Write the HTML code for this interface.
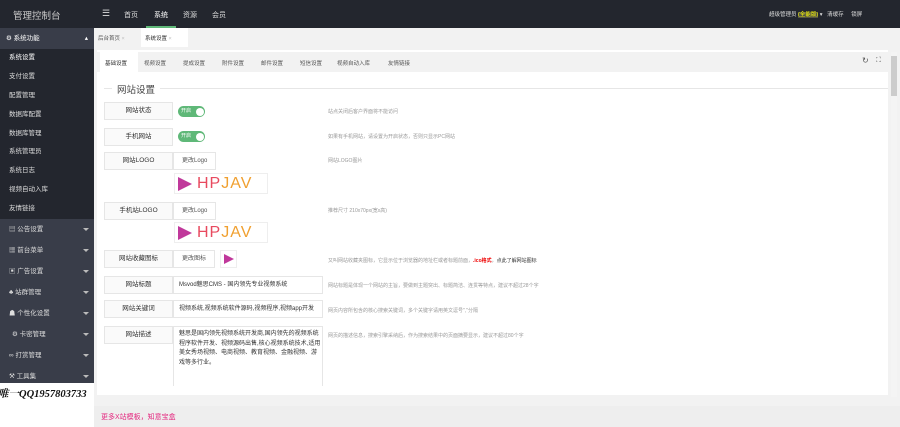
<!DOCTYPE html>
<html><head><meta charset="utf-8"><style>
*{margin:0;padding:0;box-sizing:border-box}
body{width:900px;height:427px;overflow:hidden;background:#f2f2f2;font-family:"Liberation Sans","Noto Sans CJK SC",sans-serif;font-size:7px;color:#333;position:relative}
.abs{position:absolute}
.top{left:0;top:0;width:900px;height:28px;background:#23262e;color:#ddd}
.side{left:0;top:28px;width:94px;height:355px;background:#393d49;color:#ddd}
.it{height:18.9px;line-height:18.9px;padding-left:9px;font-size:6.5px;position:relative}
.ar{height:21px;line-height:21px;padding-left:9px;font-size:6.5px;position:relative}
.ar:after{content:"";position:absolute;right:5px;top:9px;border:3px solid transparent;border-top-color:#bbb}
.lbl{left:104px;width:69px;height:18px;background:#fafafa;border:1px solid #e6e6e6;text-align:center;line-height:16px;font-size:6.5px}
.inp{left:173px;width:150px;height:18px;border:1px solid #e6e6e6;background:#fff;line-height:16px;padding-left:5px;font-size:6px;white-space:nowrap;overflow:hidden}
.btn{left:173px;height:18px;border:1px solid #e6e6e6;background:#fff;line-height:16px;padding:0 8px;color:#555;font-size:6px}
.hint{left:328px;color:#999;font-size:5px}
.tog{left:178px;width:27px;height:11px;background:#5fb878;border-radius:6px;color:#fff;font-size:5px;line-height:11px;padding-left:3px}
.tog:after{content:"";position:absolute;right:1.5px;top:1.5px;width:8px;height:8px;border-radius:50%;background:#fff}
.logo{left:174px;width:94px;height:21px;background:#fff;border:1px solid #eee;font:16px "Liberation Sans",sans-serif;line-height:20px;padding-left:22px;letter-spacing:1px}
.logo b{color:#e84a5f;font-weight:normal}.logo i{font-style:normal;color:#f0a030}
.tri{position:absolute;left:3px;top:3px;width:0;height:0;border-left:14px solid #c0389b;border-top:7px solid transparent;border-bottom:7px solid transparent}
.st{position:absolute;top:59px;font-size:5.5px;color:#555}
</style></head><body>
<div class="abs top">
 <div class="abs" style="left:13px;top:8px;font-size:9.5px;color:#ccc">管理控制台</div>
 <div class="abs" style="left:102px;top:8px;font-size:9px">☰</div>
 <div class="abs" style="left:124px;top:10px;font-size:7px">首页</div>
 <div class="abs" style="left:146px;top:0;width:30px;height:28px;border-bottom:2px solid #5fb878"></div>
 <div class="abs" style="left:154px;top:10px;font-size:7px;color:#fff">系统</div>
 <div class="abs" style="left:183px;top:10px;font-size:7px">资源</div>
 <div class="abs" style="left:212px;top:10px;font-size:7px">会员</div>
 <div class="abs" style="left:769px;top:10px;font-size:5.5px;white-space:nowrap">超级管理员 <span style="color:#ff0;background:#554">(全能版)</span> ▾ &nbsp;&nbsp;清缓存 &nbsp;&nbsp;&nbsp;&nbsp;锁屏</div>
</div>
<div class="abs side">
 <div style="height:21px;line-height:21px;padding-left:6px;font-size:6.5px;color:#fff;position:relative">⚙ 系统功能<span style="position:absolute;right:6px">▴</span></div>
 <div style="background:#23262e;height:170px">
  <div class="it" style="color:#fff">系统设置</div><div class="it">支付设置</div><div class="it">配置管理</div><div class="it">数据库配置</div><div class="it">数据库管理</div><div class="it">系统管理员</div><div class="it">系统日志</div><div class="it">视频自动入库</div><div class="it">友情链接</div>
 </div>
 <div class="ar">▤ 公告设置</div>
 <div class="ar">▦ 前台菜单</div>
 <div class="ar">▣ 广告设置</div>
 <div class="ar">♣ 站群管理</div>
 <div class="ar">☗ 个性化设置</div>
 <div class="ar" style="padding-left:12px">⚙ 卡密管理</div>
 <div class="ar">∞ 打赏管理</div>
 <div class="ar">⚒ 工具集</div>
</div>
<div class="abs" style="left:0;top:383px;width:94px;height:44px;background:#fff"></div>
<div class="abs" style="left:-2px;top:386px;font:italic bold 10.5px 'Liberation Serif','Noto Serif CJK SC',serif;color:#111;white-space:nowrap">唯一QQ1957803733</div>
<div class="abs" style="left:94px;top:28px;width:806px;height:19px;background:#f2f2f2"></div>
<div class="abs" style="left:98px;top:34px;font-size:5.5px;color:#555">后台首页 <span style="color:#bbb">×</span></div>
<div class="abs" style="left:141px;top:28px;width:47px;height:19px;background:#fff"></div>
<div class="abs" style="left:145px;top:34px;font-size:5.5px">系统设置 <span style="color:#bbb">×</span></div>
<div class="abs" style="left:97px;top:50px;width:791px;height:345px;background:#fff"></div>
<div class="abs" style="left:97px;top:52px;width:791px;height:20px;background:#f2f2f2"></div>
<div class="abs" style="left:100px;top:52px;width:38px;height:20px;background:#fff"></div>
<span class="st" style="left:105px;color:#333">基础设置</span><span class="st" style="left:144px">视频设置</span><span class="st" style="left:183px">提成设置</span><span class="st" style="left:222px">附件设置</span><span class="st" style="left:261px">邮件设置</span><span class="st" style="left:300px">短信设置</span><span class="st" style="left:337px">视频自动入库</span><span class="st" style="left:388px">友情链接</span>
<div class="abs" style="left:862px;top:56px;font-size:8px;color:#555">↻</div>
<div class="abs" style="left:876px;top:57px;font-size:7px;color:#555">⛶</div>
<div class="abs" style="left:891px;top:52px;width:6px;height:345px;background:#f4f4f4"></div>
<div class="abs" style="left:891px;top:56px;width:6px;height:40px;background:#ccc"></div>
<div class="abs" style="left:104px;top:88px;width:784px;height:1px;background:#e6e6e6"></div>
<div class="abs" style="left:112px;top:82px;background:#fff;padding:0 5px;font-size:9.5px;color:#444">网站设置</div>

<div class="abs lbl" style="top:102px">网站状态</div><div class="abs tog" style="top:106px">开启</div><div class="abs hint" style="top:108px">站点关闭后客户界面将不能访问</div>
<div class="abs lbl" style="top:128px">手机网站</div><div class="abs tog" style="top:131px">开启</div><div class="abs hint" style="top:133px">如果有手机网站，请设置为开启状态，否则只显示PC网站</div>
<div class="abs lbl" style="top:152px">网站LOGO</div><div class="abs btn" style="top:152px">更改Logo</div><div class="abs hint" style="top:157px">网站LOGO图片</div>
<div class="abs logo" style="top:173px"><span class="tri"></span><b>HP</b><i>JAV</i></div>
<div class="abs lbl" style="top:202px">手机站LOGO</div><div class="abs btn" style="top:202px">更改Logo</div><div class="abs hint" style="top:207px">推荐尺寸 210x70px(宽x高)</div>
<div class="abs logo" style="top:222px"><span class="tri"></span><b>HP</b><i>JAV</i></div>
<div class="abs lbl" style="top:250px">网站收藏图标</div><div class="abs btn" style="top:250px">更改图标</div>
<div class="abs" style="left:220px;top:250px;width:17px;height:18px;border:1px solid #eee"><span class="tri" style="border-left-width:10px;border-top-width:5px;border-bottom-width:5px;top:3px"></span></div>
<div class="abs hint" style="top:257px">又叫网站收藏夹图标，它显示位于浏览器的地址栏或者标题前面，<b style="color:#e00">.ico格式</b>，<span style="color:#333">点此了解网站图标</span></div>
<div class="abs lbl" style="top:276px">网站标题</div><div class="abs inp" style="top:276px">Msvod魅思CMS - 国内领先专业视频系统</div><div class="abs hint" style="top:282px">网站标题是体现一个网站的主旨，要做到主题突出、标题简洁、连贯等特点，建议不超过28个字</div>
<div class="abs lbl" style="top:300px">网站关键词</div><div class="abs inp" style="top:300px">视频系统,视频系统软件源码,视频程序,视频app开发</div><div class="abs hint" style="top:307px">网页内容所包含的核心搜索关键词，多个关键字请用英文逗号","分隔</div>
<div class="abs lbl" style="top:326px">网站描述</div>
<div class="abs inp" style="top:326px;height:60px;white-space:normal;line-height:9.5px;padding-top:3px;border-bottom:none">魅思是国内领先视频系统开发商,国内领先的视频系统程序软件开发、视频源码出售,核心视频系统技术,适用美女秀场视频、电商视频、教育视频、金融视频、游戏等多行业。</div>
<div class="abs hint" style="top:332px">网页的描述信息，搜索引擎采纳后，作为搜索结果中的页面摘要显示，建议不超过80个字</div>
<div class="abs" style="left:94px;top:406px;width:806px;height:21px;background:#eee"></div>
<div class="abs" style="left:101px;top:412px;font-size:7px;color:#e4287f">更多X站模板，知意宝盒</div>
</body></html>
